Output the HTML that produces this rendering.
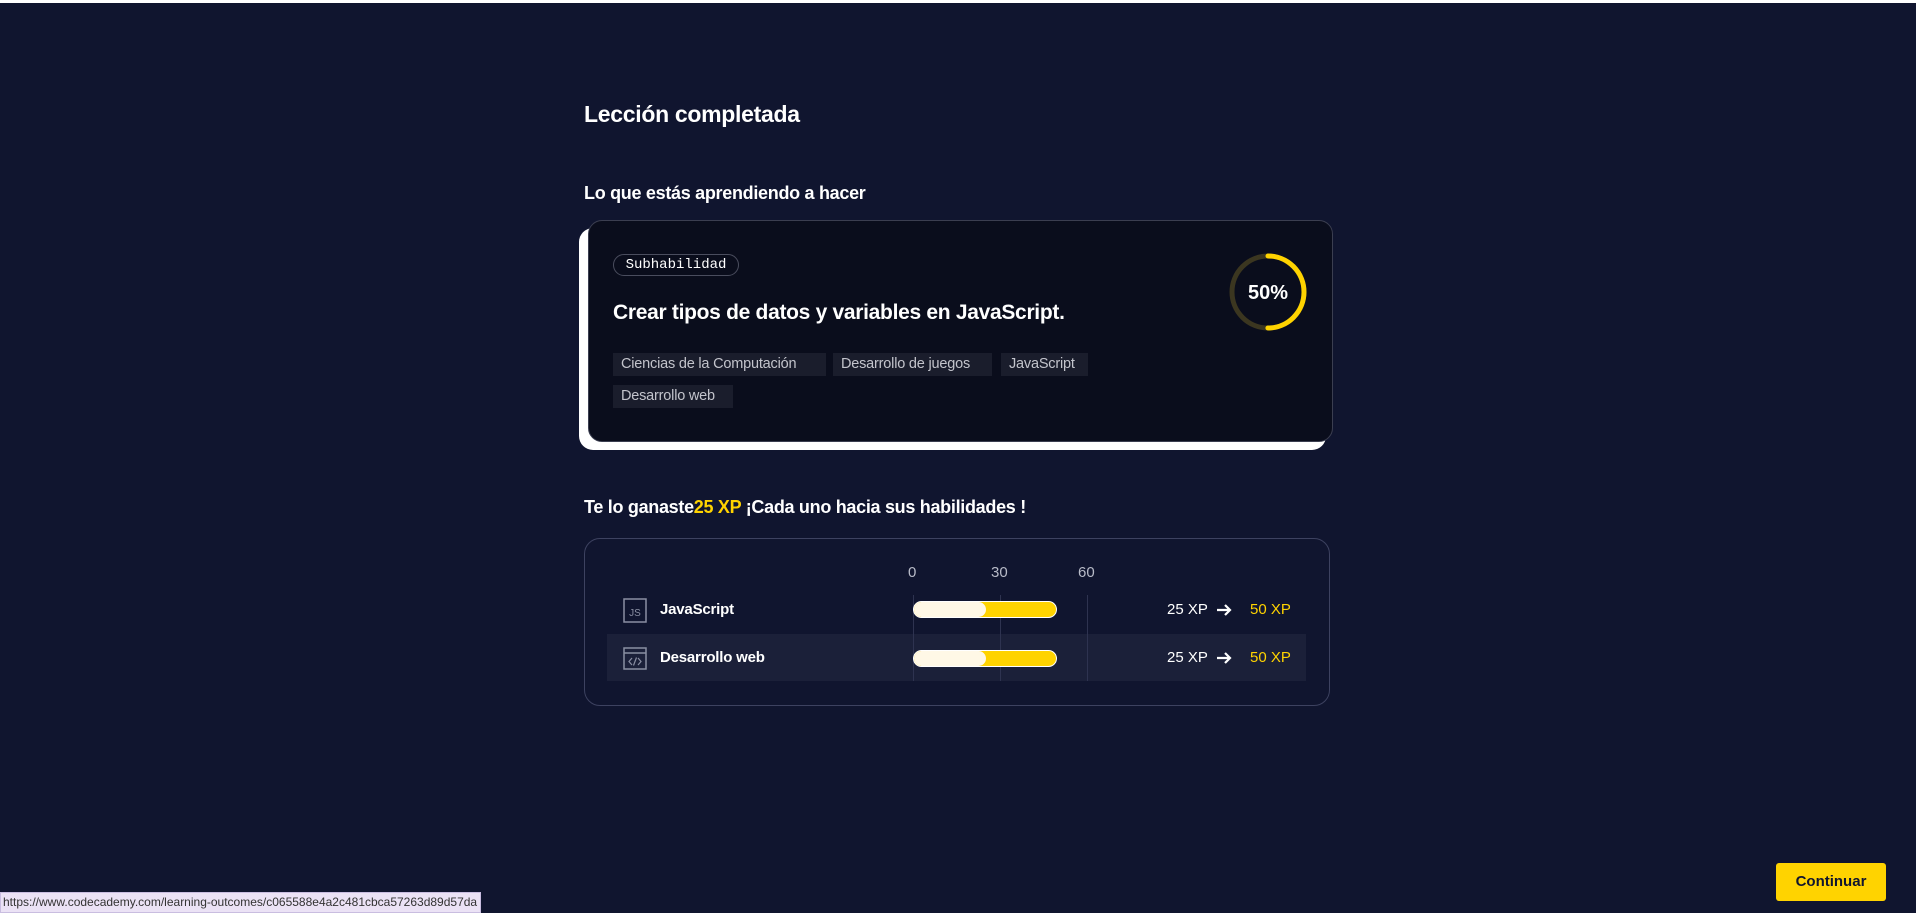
<!DOCTYPE html>
<html><head><meta charset="utf-8"><style>
*{margin:0;padding:0;box-sizing:border-box}
body{width:1916px;height:913px;background:#10152f;position:relative;overflow:hidden;font-family:"Liberation Sans",sans-serif;color:#fff}
.a{position:absolute}
.top{left:0;top:0;width:1916px;height:3px;background:#fff}
h1{position:absolute;left:584px;top:101px;font-size:23px;font-weight:bold;letter-spacing:-0.3px}
.h2{font-size:18px;font-weight:bold;letter-spacing:-0.3px}
.shadow{left:579px;top:228px;width:747px;height:222px;background:#fff;border-radius:14px}
.card{left:588px;top:220px;width:745px;height:222px;background:#0a0d1c;border:1.5px solid #3b3e50;border-radius:14px}
.pill{left:613px;top:254px;width:126px;height:22px;border:1px solid #4a4d5e;border-radius:11px;font-family:"Liberation Mono",monospace;font-size:14px;line-height:20px;text-align:center;color:#fff}
.tag{height:23px;background:#1a1d2c;color:#c3c4cc;font-size:14.5px;line-height:23px;padding-left:8px;letter-spacing:-0.2px}
.box{left:584px;top:538px;width:746px;height:168px;border:1px solid #3d4260;border-radius:16px}
.ax{font-size:15px;color:#b8bbc8;top:564px}
.gl{width:1px;background:#2e3350;top:595px;height:86px}
.band{left:607px;top:634px;width:699px;height:47px;background:#1b2039}
.lbl{font-size:15px;font-weight:bold;letter-spacing:-0.2px}
.bar{left:913px;width:144px;height:17px;border-radius:9px;background:#ffd300;overflow:hidden;border:1px solid #fff}
.bar div{width:72px;height:100%;background:#fff8e6;border-radius:9px}
.xp{font-size:15px}
.btn{left:1776px;top:863px;width:110px;height:38px;background:#ffd300;border-radius:3px;color:#10152f;font-size:15px;font-weight:bold;text-align:center;line-height:38px}
.status{left:0;top:892px;width:481px;height:21px;background:#ebe2f5;border:1px solid #c9bde0;color:#333;font-size:12px;line-height:19px;padding-left:2px}
</style></head><body>
<div class="a top"></div>
<h1>Lección completada</h1>
<div class="a h2" style="left:584px;top:183px">Lo que estás aprendiendo a hacer</div>
<div class="a shadow"></div>
<div class="a card"></div>
<div class="a pill">Subhabilidad</div>
<div class="a" style="left:613px;top:301px;font-size:21px;font-weight:bold;letter-spacing:-0.3px">Crear tipos de datos y variables en JavaScript.</div>
<div class="a tag" style="left:613px;top:353px;width:213px">Ciencias de la Computación</div>
<div class="a tag" style="left:833px;top:353px;width:159px">Desarrollo de juegos</div>
<div class="a tag" style="left:1001px;top:353px;width:87px">JavaScript</div>
<div class="a tag" style="left:613px;top:385px;width:120px">Desarrollo web</div>
<svg class="a" style="left:1226px;top:250px" width="84" height="84" viewBox="0 0 84 84">
<circle cx="42" cy="42" r="36" fill="none" stroke="#3b3620" stroke-width="5"/>
<circle cx="42" cy="42" r="36" fill="none" stroke="#ffd300" stroke-width="5" stroke-dasharray="113 300" transform="rotate(-90 42 42)" stroke-linecap="round"/>
<text x="42" y="49" text-anchor="middle" font-family="Liberation Sans" font-weight="bold" font-size="20" fill="#fff">50%</text>
</svg>
<div class="a h2" style="left:584px;top:497px">Te lo ganaste<span style="color:#ffd300">25 XP</span> ¡Cada uno hacia sus habilidades !</div>
<div class="a box"></div>
<div class="a band"></div>
<div class="a ax" style="left:908px">0</div>
<div class="a ax" style="left:991px">30</div>
<div class="a ax" style="left:1078px">60</div>
<div class="a gl" style="left:913px"></div>
<div class="a gl" style="left:1000px"></div>
<div class="a gl" style="left:1087px"></div>
<svg class="a" style="left:623px;top:598px" width="25" height="25"><rect x="1" y="1" width="22" height="23" fill="none" stroke="#8a8fa3" stroke-width="1.5"/><text x="12" y="18" text-anchor="middle" font-family="Liberation Sans" font-size="10" fill="#8a8fa3">JS</text></svg>
<div class="a lbl" style="left:660px;top:601px">JavaScript</div>
<svg class="a" style="left:623px;top:647px" width="25" height="23"><rect x="1" y="1" width="22" height="21" fill="none" stroke="#8a8fa3" stroke-width="1.5"/><line x1="1" y1="6" x2="23" y2="6" stroke="#8a8fa3" stroke-width="1.5"/><path d="M9 11 L6 14.5 L9 18 M15 11 L18 14.5 L15 18 M13.5 10.5 L10.5 18.5" fill="none" stroke="#8a8fa3" stroke-width="1.2"/></svg>
<div class="a lbl" style="left:660px;top:649px">Desarrollo web</div>
<div class="a bar" style="top:601px"><div></div></div>
<div class="a bar" style="top:650px"><div></div></div>
<div class="a xp" style="left:1167px;top:601px">25 XP</div>
<svg class="a" style="left:1216px;top:603px" width="17" height="14"><path d="M1 7 H14 M9 2 L14 7 L9 12" fill="none" stroke="#fff" stroke-width="2.2"/></svg>
<div class="a xp" style="left:1250px;top:601px;color:#ffd300">50 XP</div>
<div class="a xp" style="left:1167px;top:649px">25 XP</div>
<svg class="a" style="left:1216px;top:651px" width="17" height="14"><path d="M1 7 H14 M9 2 L14 7 L9 12" fill="none" stroke="#fff" stroke-width="2.2"/></svg>
<div class="a xp" style="left:1250px;top:649px;color:#ffd300">50 XP</div>
<div class="a btn">Continuar</div>
<div class="a status">https://www.codecademy.com/learning-outcomes/c065588e4a2c481cbca57263d89d57da</div>
</body></html>
